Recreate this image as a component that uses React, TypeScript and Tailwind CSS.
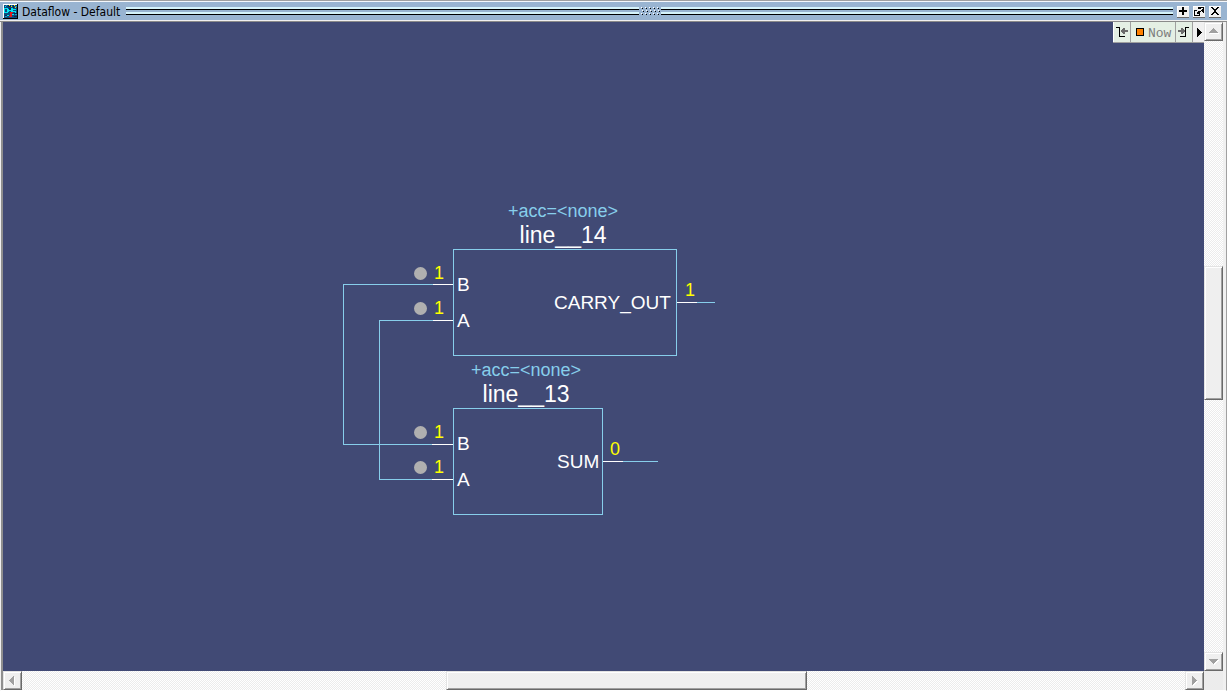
import React from "react";

const checker =
  "bg-[repeating-conic-gradient(#ececec_0_25%,#ffffff_0_50%)] bg-[length:2px_2px]";

const raised =
  "shrink-0 bg-[#efefef] border border-t-[#e3e3e3] border-l-[#e3e3e3] border-r-[#696969] border-b-[#696969] shadow-[inset_1px_1px_0_#ffffff,inset_-1px_-1px_0_#a0a0a0]";

const arrows = {
  up: "M5 11h9v-1h-1v-1h-1v-1h-1v-1h-1v-1h-1v1h-1v1h-1v1h-1v1h-1z",
  down: "M5 7h9v1h-1v1h-1v1h-1v1h-1v1h-1v-1h-1v-1h-1v-1h-1v-1h-1z",
  left: "M11 5v9h-1v-1h-1v-1h-1v-1h-1v-1h-1v-1h1v-1h1v-1h1v-1h1v-1z",
  right: "M7 5v9h1v-1h1v-1h1v-1h1v-1h1v-1h-1v-1h-1v-1h-1v-1h-1v-1z",
};

function ScrollButton({ dir }: { dir: keyof typeof arrows }) {
  return (
    <button type="button" aria-label={"Scroll " + dir} className={"relative size-[19px] " + raised}>
      <svg className="absolute -left-px -top-px" width="19" height="19" shapeRendering="crispEdges">
        <path d={arrows[dir]} fill="#fff" transform="translate(1 1)" />
        <path d={arrows[dir]} fill="#a0a0a0" />
      </svg>
    </button>
  );
}

function AppIcon() {
  return (
    <svg className="mt-px" width="15" height="15" shapeRendering="crispEdges" aria-hidden="true">
      <path fill="#000" d="M0 0h15v15H0z" />
      <path fill="#fff" d="M0 0h14v1H1v13H0z" />
      <path fill="#0b4a7d" d="M1 1h13v13H1z" />
      <path fill="#062a50" d="M5 1h3v2H5zM10 1h1v3h-1zM2 11h4v1H2zM6 4h2v2H6zM11 9h3v1h-3zM11 12h3v1h-3z" />
      <path fill="#1c93c4" d="M3 1h1v1H3zM12 2h2v1h-2zM2 12h2v1H2zM12 10h2v1h-2zM8 1h1v1H8z" />
      <path fill="#00e5f5" d="M1 4h4v1h1v3H5v1H1V8h3V5H1zM6 6h2v1H6zM8 4h2v1h3v1h-3v1h2v1H8zM1 5h1v3H1zM9 10h2v1H9zM12 7h1v2h-1zM2 2h1v1H2zM4 11h2v1H4z" />
      <path fill="#e31b1b" d="M7 8h2v5H7zM6 12h1v1H6zM9 8h1v1H9z" />
      <path fill="#f5e400" d="M6 1h1v1H6zM8 2h1v1H8zM11 1h1v1h-1zM12 3h1v1h-1z" />
    </svg>
  );
}

const windowIcons = {
  Add: "M5 1h2v3h3v2H7v3H5V6H2V4h3z",
  Undock: "M1 4h3v1H2v4h4V7h1v3H1zM5 1h6v6h-1V6H9V5H8v1H7v1H6v1H4V6h1V5h1V4h1V3H5zM8 2v1H7v1H6v1h1V5h1V4h1V3h1V2z",
  Close: "M2 1h2v1h1v1h2V2h1V1h2v1H9v1H8v1H7v2h1v1h1v1h1v1H8V8H7V7H5v1H4v1H2V8h1V7h1V6h1V4H4V3H3V2H2z",
};

function WindowButton({ name }: { name: keyof typeof windowIcons }) {
  return (
    <button
      type="button"
      aria-label={name}
      className="h-[11px] w-3 bg-[#f0f0f0] shadow-[inset_1px_1px_0_#ffffff,0_1px_0_#696969]"
    >
      <svg width="12" height="11" shapeRendering="crispEdges" fillRule="evenodd">
        <path d={windowIcons[name]} />
      </svg>
    </button>
  );
}

function Stripes() {
  return (
    <div className="flex flex-1 flex-col gap-[2px]">
      <div className="h-[3px] border-b border-black bg-[#d5f3fa]" />
      <div className="h-[3px] border-b border-black bg-[#d5f3fa]" />
    </div>
  );
}

function Grip() {
  const rows = [0, 1, 2];
  const dots = [0, 1, 2, 3, 4];
  return (
    <svg width="22" height="9" shapeRendering="crispEdges" aria-hidden="true">
      {rows.map((r) =>
        dots.map((d) => (
          <g key={r + "-" + d}>
            <rect x={2 + d * 4 + (r % 2)} y={r * 3} width="1" height="1" fill="#fff" />
            <rect x={3 + d * 4 + (r % 2)} y={r * 3 + 1} width="1" height="1" fill="#000" />
          </g>
        ))
      )}
    </svg>
  );
}

function TitleBar() {
  return (
    <header className="flex h-[22px] shrink-0 items-center border-t border-b border-t-[#a0a0a0] border-b-[#8a8a8a] bg-[#99b4d1] pl-[3px] pr-[6px] shadow-[inset_0_1px_0_#f4f7fb,inset_0_-1px_0_#f0f0f0]">
      <AppIcon />
      <h1 className="mt-px ml-1 mr-[6px] whitespace-nowrap font-['DejaVu_Sans_Condensed','DejaVu_Sans',sans-serif] text-[12px] leading-4 font-normal">
        Dataflow - Default
      </h1>
      <Stripes />
      <Grip />
      <Stripes />
      <div className="ml-1 flex gap-1">
        <WindowButton name="Add" />
        <WindowButton name="Undock" />
        <WindowButton name="Close" />
      </div>
    </header>
  );
}

function TimeToolbar() {
  return (
    <div className="absolute top-0 right-0 flex h-[21px] items-stretch border-b border-b-[#a0a0a0] bg-[#e4efe4]">
      <button type="button" aria-label="Previous event" className="w-[18px] border-x border-l-white border-r-[#a0a0a0]">
        <svg width="16" height="20" shapeRendering="crispEdges">
          <path fill="#000" d="M2 5h4v9h5v1H5V6H2z" />
          <path fill="#6b6b6b" d="M7 8h1V7h1V6h2v2h3v2h-3v2H9v-1H8v-1H7z" />
        </svg>
      </button>
      <button
        type="button"
        className="flex w-[45px] items-center gap-1 border-r border-r-[#a0a0a0] pl-[5px] font-['Liberation_Mono',monospace] text-[13px] leading-4 text-[#7c7c7c]"
      >
        <span className="size-2 shrink-0 border border-black bg-[#ff8000]" />
        <span className="pt-[3px]">Now</span>
      </button>
      <button type="button" aria-label="Next event" className="w-[17px] border-r border-r-[#a0a0a0]">
        <svg width="16" height="20" shapeRendering="crispEdges">
          <path fill="#000" d="M13 5H9v9H4v1h6V6h3z" />
          <path fill="#6b6b6b" d="M9 8H8V7H7V6H5v2H2v2h3v2h2v-1h1v-1h1z" />
        </svg>
      </button>
      <button type="button" aria-label="More" className="w-[11px] bg-[#f0f0f0]">
        <svg width="11" height="20" shapeRendering="crispEdges">
          <path d="M4 6v9h1v-1h1v-1h1v-1h1v-1h1v-1H8V9H7V8H6V7H5V6z" />
        </svg>
      </button>
    </div>
  );
}

function Pin({ className, children }: { className: string; children: string }) {
  return <span className={"absolute text-[19px] leading-6 text-white " + className}>{children}</span>;
}

function Value({ className, children }: { className: string; children: string }) {
  return <span className={"absolute text-[18px] leading-5 text-[#ffff00] " + className}>{children}</span>;
}

function Caption({ className, name }: { className: string; name: string }) {
  return (
    <div className={"absolute text-center whitespace-nowrap " + className}>
      <div className="text-[18px] leading-6 text-[#87ceeb]">+acc=&lt;none&gt;</div>
      <div className="text-[23px] leading-6 text-white">{name}</div>
    </div>
  );
}

function Dataflow() {
  return (
    <main className="relative min-w-0 flex-1 overflow-hidden bg-[#414a75] font-['Liberation_Sans',Arial,sans-serif]">
      <svg className="absolute top-0 left-0" width="800" height="520" fill="none" strokeWidth="1" shapeRendering="crispEdges">
        <g stroke="#87ceeb">
          <path d="M450.5 227.5h223v106h-223zM450.5 386.5h149v106h-149z" />
          <path d="M430 262.5h-89.5v160h89M430 298.5h-53.5v159h53M694 280.5h18M620 439.5h35" />
        </g>
        <path stroke="#fff" d="M430 262.5h20M430 298.5h20M429 422.5h21M429 457.5h21M674 280.5h20M600 439.5h20" />
        <g fill="#b0b0b0" shapeRendering="auto">
          <circle cx="417.5" cy="251.5" r="6.5" />
          <circle cx="417.5" cy="286.5" r="6.5" />
          <circle cx="417.5" cy="410.5" r="6.5" />
          <circle cx="417.5" cy="445.5" r="6.5" />
        </g>
      </svg>
      <Caption className="left-[505px] top-[177px]" name="line__14" />
      <Value className="left-[431px] top-[241px]">1</Value>
      <Value className="left-[431px] top-[276px]">1</Value>
      <Pin className="left-[454px] top-[251px]">B</Pin>
      <Pin className="left-[454px] top-[287px]">A</Pin>
      <Pin className="left-[551px] top-[269px]">CARRY_OUT</Pin>
      <Value className="left-[682px] top-[258px]">1</Value>
      <Caption className="left-[468px] top-[336px]" name="line__13" />
      <Value className="left-[431px] top-[400px]">1</Value>
      <Value className="left-[431px] top-[435px]">1</Value>
      <Pin className="left-[454px] top-[410px]">B</Pin>
      <Pin className="left-[454px] top-[446px]">A</Pin>
      <Pin className="left-[554px] top-[428px]">SUM</Pin>
      <Value className="left-[607px] top-[417px]">0</Value>
      <TimeToolbar />
    </main>
  );
}

export default function App() {
  return (
    <div className="flex h-screen flex-col bg-[#f0f0f0] text-black">
      <TitleBar />
      <div className="flex min-h-0 flex-1 flex-col border-x border-b border-l-[#f0f0f0] border-r-[#a0a0a0] border-b-white">
        <div className="flex min-h-0 flex-1 flex-col border-l-2 border-l-[#8f8f8f] pr-[3px]">
          <div className="flex min-h-0 flex-1">
            <Dataflow />
            <div className={"flex w-[19px] flex-col " + checker}>
              <ScrollButton dir="up" />
              <div className="flex-[226]" />
              <div className={"flex-[132] " + raised} />
              <div className="flex-[253]" />
              <ScrollButton dir="down" />
            </div>
          </div>
          <div className="flex h-[19px] shrink-0">
            <div className={"flex flex-1 " + checker}>
              <ScrollButton dir="left" />
              <div className="flex-[425]" />
              <div className={"flex-[359] " + raised} />
              <div className="flex-[379]" />
              <ScrollButton dir="right" />
            </div>
            <div className="w-[19px] bg-[#ececec]" />
          </div>
        </div>
      </div>
    </div>
  );
}
